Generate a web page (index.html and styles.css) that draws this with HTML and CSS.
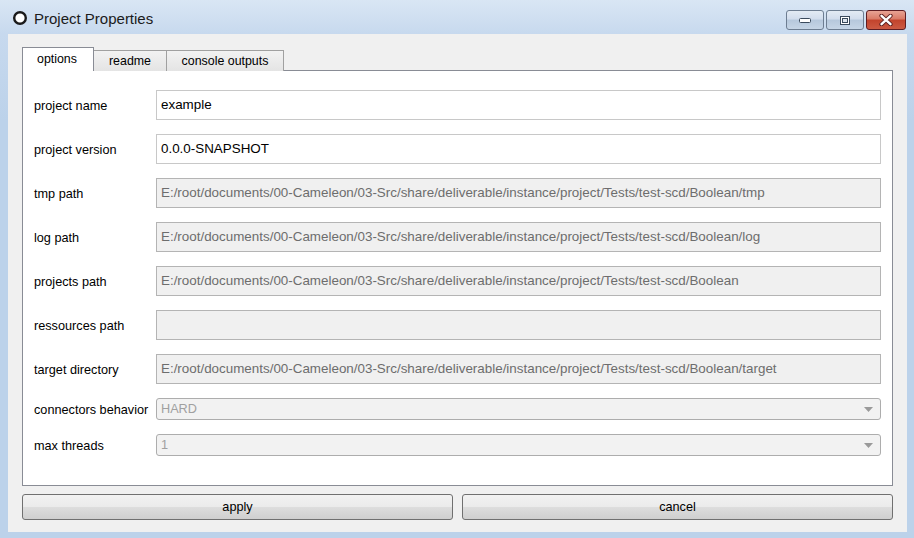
FILE: index.html
```html
<!DOCTYPE html>
<html lang="en">
<head>
    <meta charset="UTF-8">
    <title>Project Properties</title>
    <link rel="stylesheet" href="styles.css">
</head>
<body>

<div class="window">
    <div class="titlebar">
        <svg class="app-icon" width="16" height="16" viewBox="0 0 16 16">
            <circle cx="8" cy="8" r="5.8" fill="#ffffff" stroke="#1a1a1a" stroke-width="2.4"/>
        </svg>
        <span class="title">Project Properties</span>
        <div class="win-buttons">
            <div class="win-btn">
                <svg width="14" height="8" viewBox="0 0 14 8"><rect x="1.5" y="2.5" width="11" height="4" rx="1" fill="#ffffff" stroke="#3a4a5c"/></svg>
            </div>
            <div class="win-btn">
                <svg width="12" height="11" viewBox="0 0 12 11"><rect x="1.5" y="1.5" width="9" height="8" fill="#ffffff" stroke="#3a4a5c"/><rect x="3.5" y="3.5" width="5" height="4" fill="#dde4ec" stroke="#3a4a5c"/></svg>
            </div>
            <div class="win-btn close">
                <svg width="16" height="12" viewBox="0 0 16 12"><path d="M3.5 1.8 L12.5 10.2 M12.5 1.8 L3.5 10.2" stroke="#5a1f1f" stroke-width="4.2" stroke-linecap="round"/><path d="M3.5 1.8 L12.5 10.2 M12.5 1.8 L3.5 10.2" stroke="#ffffff" stroke-width="2.4" stroke-linecap="round"/></svg>
            </div>
        </div>
    </div>

    <div class="client">
        <div class="tabs">
            <div class="tab active">options</div>
            <div class="tab">readme</div>
            <div class="tab">console outputs</div>
        </div>

        <div class="pane">
            <div class="form">
                <label>project name</label>
                <input class="field" type="text" value="example">

                <label>project version</label>
                <input class="field" type="text" value="0.0.0-SNAPSHOT">

                <label>tmp path</label>
                <input class="field" type="text" disabled value="E:/root/documents/00-Cameleon/03-Src/share/deliverable/instance/project/Tests/test-scd/Boolean/tmp">

                <label>log path</label>
                <input class="field" type="text" disabled value="E:/root/documents/00-Cameleon/03-Src/share/deliverable/instance/project/Tests/test-scd/Boolean/log">

                <label>projects path</label>
                <input class="field" type="text" disabled value="E:/root/documents/00-Cameleon/03-Src/share/deliverable/instance/project/Tests/test-scd/Boolean">

                <label>ressources path</label>
                <input class="field" type="text" disabled value="">

                <label>target directory</label>
                <input class="field" type="text" disabled value="E:/root/documents/00-Cameleon/03-Src/share/deliverable/instance/project/Tests/test-scd/Boolean/target">

                <label>connectors behavior</label>
                <div class="combo">
                    <span>HARD</span>
                    <svg width="9" height="5" viewBox="0 0 9 5"><path d="M0 0 H9 L4.5 5 Z" fill="#9a9a9a"/></svg>
                </div>

                <label>max threads</label>
                <div class="combo">
                    <span>1</span>
                    <svg width="9" height="5" viewBox="0 0 9 5"><path d="M0 0 H9 L4.5 5 Z" fill="#9a9a9a"/></svg>
                </div>
            </div>
        </div>

        <div class="actions">
            <button class="button">apply</button>
            <button class="button">cancel</button>
        </div>
    </div>
</div>

</body>
</html>
```

FILE: styles.css
```css
html, body {
    margin: 0;
    padding: 0;
}
body {
    font-family: "Liberation Sans", Arial, sans-serif;
    font-size: 12.7px;
    color: #000000;
    background-color: #bfd4eb;
}
.window {
    width: 914px;
    height: 538px;
    display: flex;
    flex-direction: column;
    background: linear-gradient(#d9e6f4 0px, #c7d9ee 34px, #bcd2ea 120px, #bcd2ea 100%);
}
.titlebar {
    height: 34px;
    display: flex;
    align-items: center;
    padding-left: 12px;
    box-sizing: border-box;
}
.app-icon {
    margin-top: 2px;
}
.title {
    font-size: 15px;
    margin-left: 6px;
    color: #1b1b1b;
    margin-top: 2px;
}
.win-buttons {
    margin-left: auto;
    margin-right: 8px;
    align-self: flex-start;
    margin-top: 10px;
    display: flex;
    gap: 2px;
}
.win-btn {
    width: 38px;
    height: 20px;
    box-sizing: border-box;
    border: 1px solid #6d7d91;
    border-radius: 3px;
    background: linear-gradient(#e3ebf4 0%, #d2dded 45%, #b6c8dc 50%, #c6d5e6 100%);
    display: flex;
    align-items: center;
    justify-content: center;
}
.win-btn.close {
    width: 40px;
    border-color: #5e1d22;
    background: linear-gradient(#e8a394 0%, #d97a66 45%, #c2432c 50%, #cc5a43 100%);
}
.client {
    flex: 1;
    margin: 0 7px 6px 8px;
    background-color: #f0f0f0;
    padding: 14px 14px 11px 14px;
    display: flex;
    flex-direction: column;
}
.tabs {
    display: flex;
    align-items: flex-end;
    height: 23px;
    margin-bottom: -1px;
    position: relative;
    z-index: 1;
}
.tab {
    height: 21px;
    box-sizing: border-box;
    border: 1px solid #a0a0a0;
    border-bottom: none;
    border-left: none;
    background: linear-gradient(#f2f2f2, #e4e4e4);
    padding: 3px 14px 0 14px;
    font-size: 12.4px;
}
.tab.active {
    height: 24px;
    border-left: 1px solid #898c95;
    border-color: #898c95;
    background: #ffffff;
    padding: 4px 14px 0 14px;
    width: 72px;
    box-sizing: border-box;
}
.tab:nth-child(2) {
    width: 73px;
    text-align: center;
    padding: 3px 0 0 0;
}
.tab:nth-child(3) {
    width: 117px;
    text-align: center;
    padding: 3px 0 0 0;
}
.pane {
    height: 416px;
    box-sizing: border-box;
    border: 1px solid #898c95;
    background-color: #ffffff;
    padding: 19px 11px 0 11px;
}
.form {
    display: grid;
    grid-template-columns: 122px 1fr;
    row-gap: 14px;
    align-items: center;
}
.form label {
    padding-top: 2px;
}
.field {
    height: 30px;
    box-sizing: border-box;
    border: 1px solid #c8c8c8;
    font-family: "Liberation Sans", Arial, sans-serif;
    font-size: 13.4px;
    padding: 0 4px;
    padding-bottom: 2px;
    color: #000000;
    background-color: #ffffff;
    outline: none;
    margin: 0;
}
.field:disabled {
    background-color: #f0f0f0;
    border-color: #b4b4b4;
    color: #6d6d6d;
}
.combo {
    height: 22px;
    box-sizing: border-box;
    border: 1px solid #adadad;
    border-radius: 3px;
    background-color: #f2f2f2;
    color: #a0a0a0;
    display: flex;
    align-items: center;
    justify-content: space-between;
    padding: 0 7px 0 4px;
}
.actions {
    margin-top: 8px;
    display: grid;
    grid-template-columns: 1fr 1fr;
    column-gap: 9px;
}
.button {
    height: 26px;
    box-sizing: border-box;
    border: 1px solid #707070;
    border-radius: 3px;
    background: linear-gradient(#f2f2f2 0%, #ebebeb 48%, #dddddd 52%, #cfcfcf 100%);
    font-family: "Liberation Sans", Arial, sans-serif;
    font-size: 12.7px;
    color: #000000;
    padding: 0;
}
```
